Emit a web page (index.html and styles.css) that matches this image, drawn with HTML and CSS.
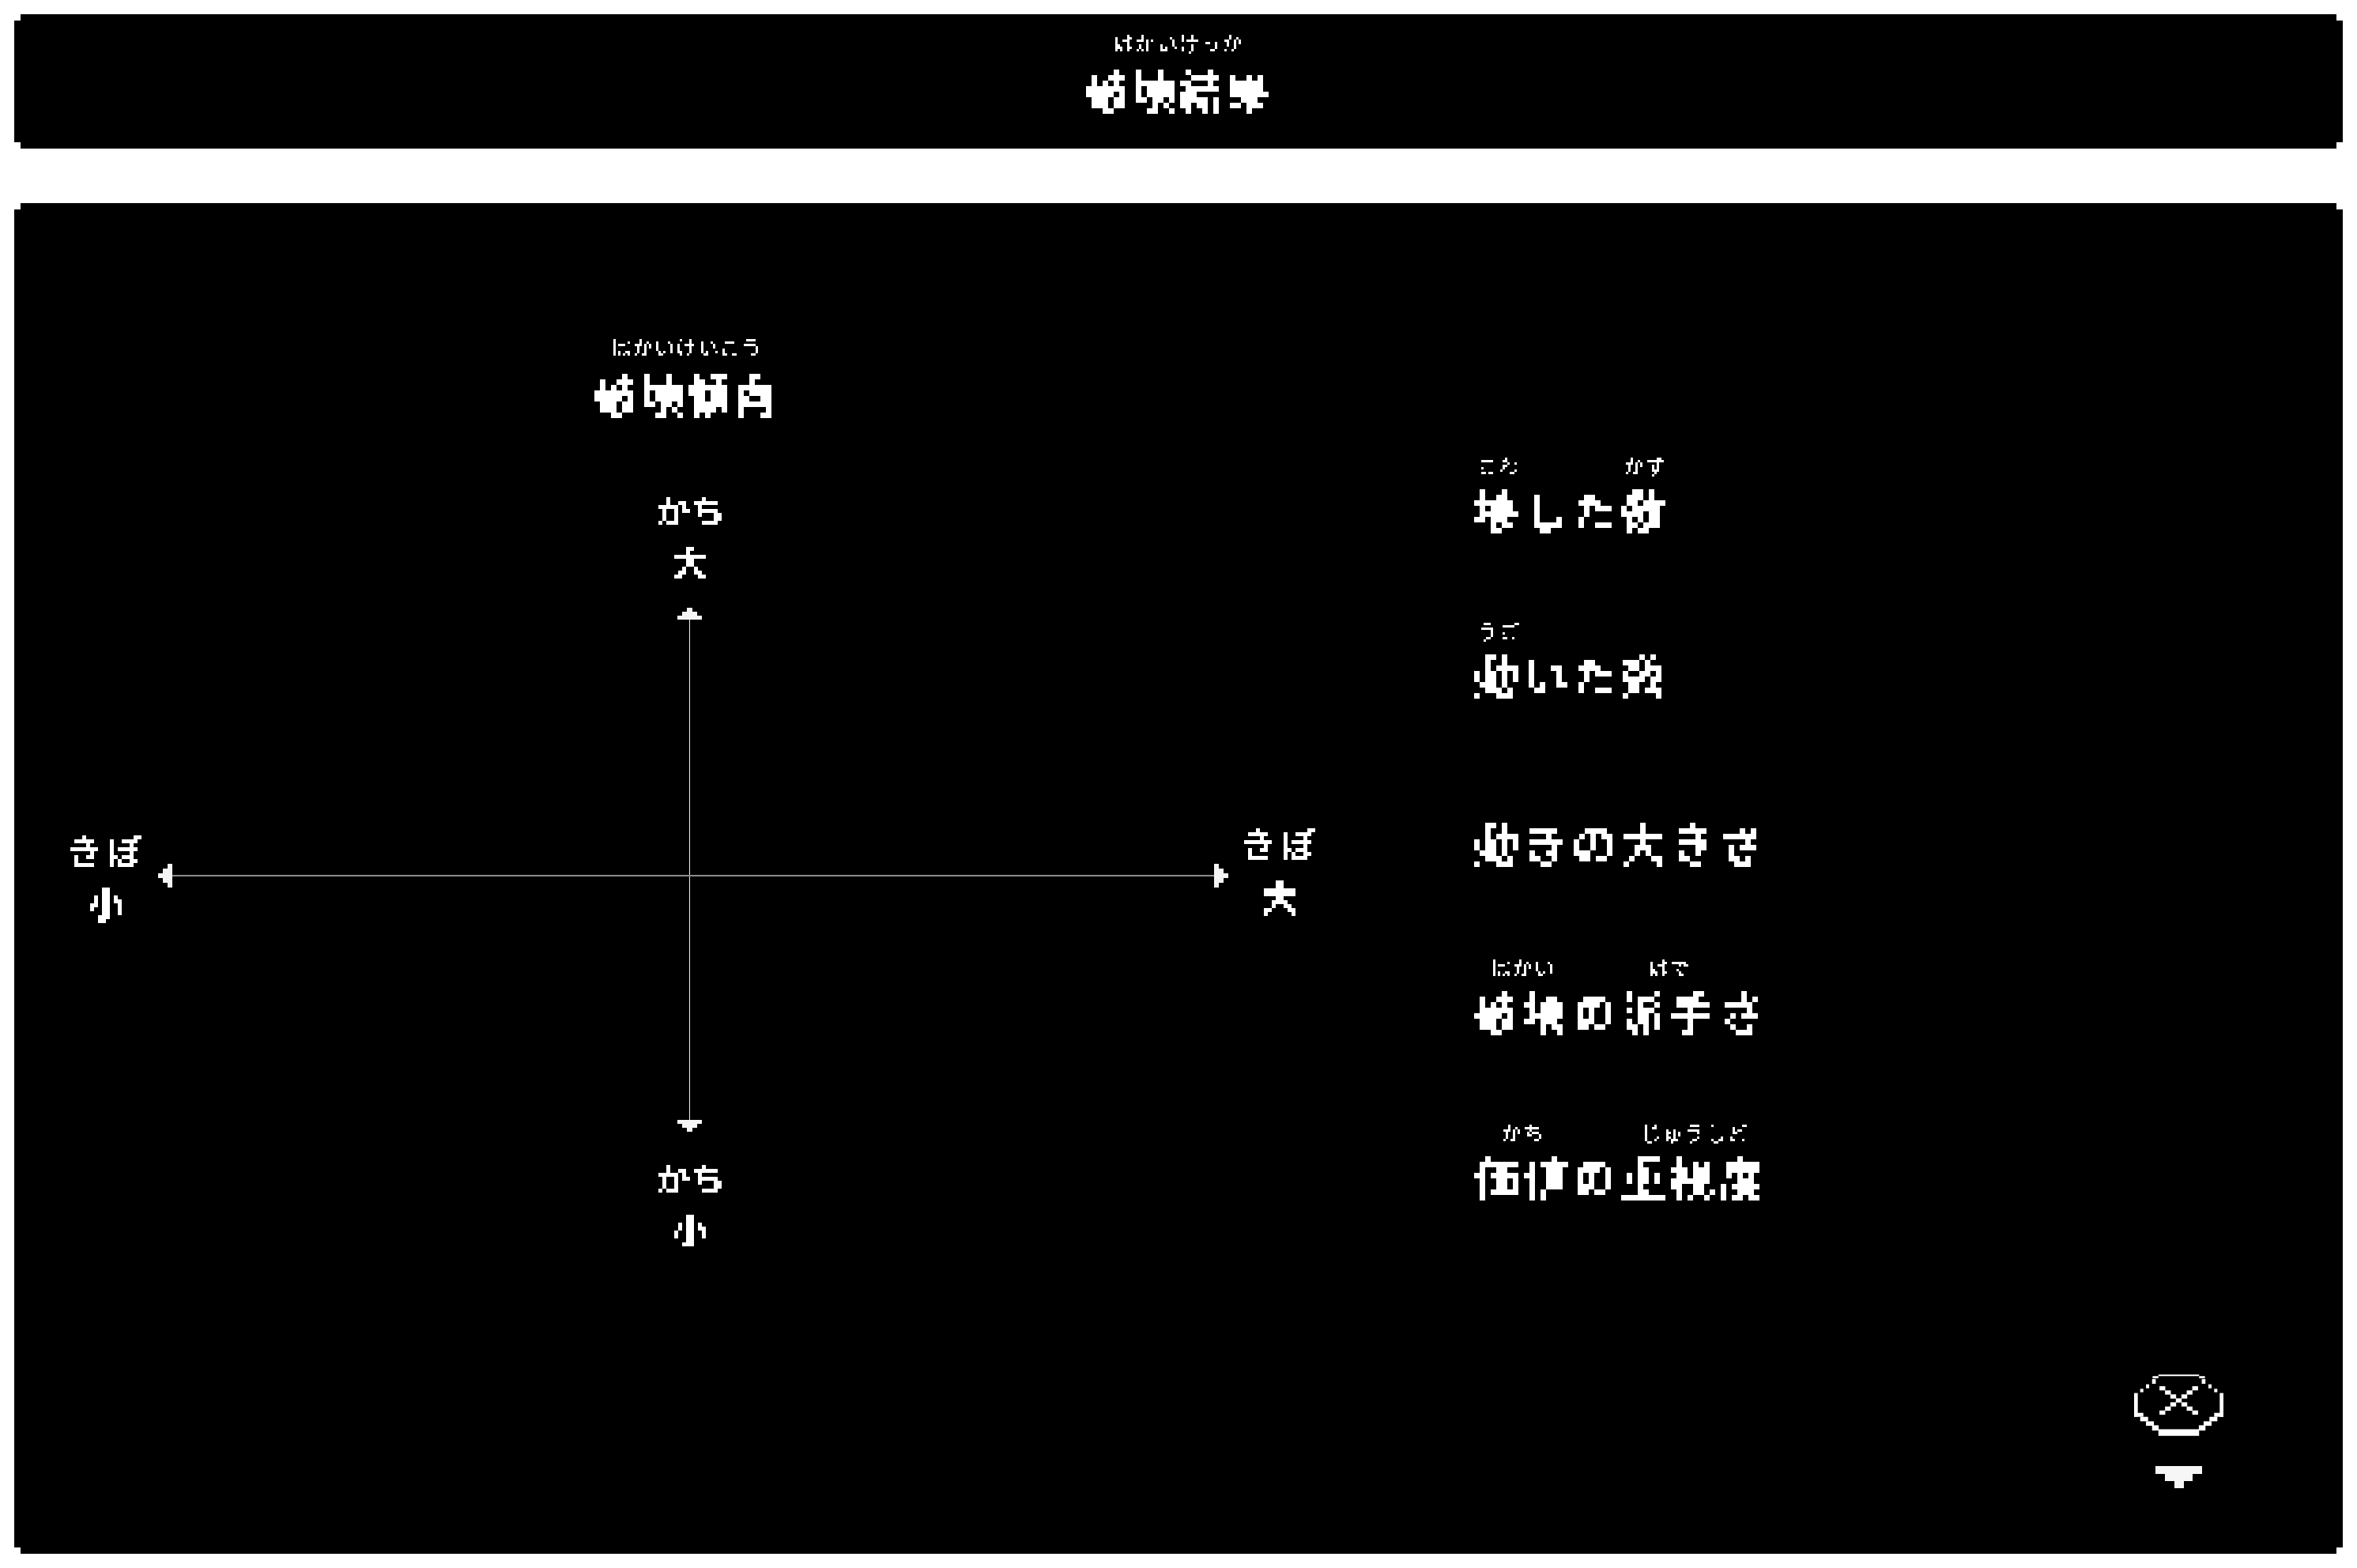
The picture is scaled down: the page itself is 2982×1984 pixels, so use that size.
FILE: index.html
```html
<!DOCTYPE html>
<html lang="ja">
<head>
<meta charset="utf-8">
<title>破壊結果</title>
<link rel="stylesheet" href="styles.css">
</head>
<body>
<svg class="defs" width="0" height="0" aria-hidden="true">
  <defs>
    <filter id="px7" x="0" y="0" width="100%" height="100%" color-interpolation-filters="sRGB">
      <feGaussianBlur in="SourceGraphic" stdDeviation="1" result="b"/>
      <feComponentTransfer in="b" result="t"><feFuncA type="discrete" tableValues="0 1"/></feComponentTransfer>
      <feFlood x="3" y="3" width="1" height="1" flood-color="#fff"/>
      <feComposite width="7" height="7"/>
      <feTile result="a"/>
      <feComposite in="t" in2="a" operator="in"/>
      <feMorphology operator="dilate" radius="3"/>
    </filter>
    <filter id="px5" x="0" y="0" width="100%" height="100%" color-interpolation-filters="sRGB">
      <feGaussianBlur in="SourceGraphic" stdDeviation="1.1" result="b"/>
      <feComponentTransfer in="b" result="t"><feFuncA type="discrete" tableValues="0 1 1"/></feComponentTransfer>
      <feFlood x="2" y="2" width="1" height="1" flood-color="#fff"/>
      <feComposite width="5" height="5"/>
      <feTile result="a"/>
      <feComposite in="t" in2="a" operator="in"/>
      <feMorphology operator="dilate" radius="2"/>
    </filter>
    <filter id="px3" x="0" y="0" width="100%" height="100%" color-interpolation-filters="sRGB">
      <feGaussianBlur in="SourceGraphic" stdDeviation="0.6" result="b"/>
      <feComponentTransfer in="b" result="t"><feFuncA type="discrete" tableValues="0 1 1"/></feComponentTransfer>
      <feFlood x="1" y="1" width="1" height="1" flood-color="#fff"/>
      <feComposite width="3" height="3"/>
      <feTile result="a"/>
      <feComposite in="t" in2="a" operator="in"/>
      <feMorphology operator="dilate" radius="1"/>
    </filter>
  </defs>
</svg>

<header class="panel head">
  <ruby class="word title"><span class="big">破壊結果</span><rt class="furi">はかいけっか</rt></ruby>
</header>

<main class="panel body-panel">
  <section class="tendency">
    <h2 class="sec-title"><ruby class="word title"><span class="big">破壊傾向</span><rt class="furi">はかいけいこう</rt></ruby></h2>
    <div class="chart">
      <svg class="axes" width="1354" height="663" viewBox="200 769 1354 663" aria-hidden="true">
        <rect x="872" y="784" width="1" height="633" fill="#eee"/>
        <rect x="218" y="1107" width="1318" height="2" fill="#8c8c8c"/>
        <g fill="#f4f4f4">
          <rect x="869" y="769" width="7" height="5"/><rect x="863" y="774" width="19" height="5"/><rect x="857" y="779" width="31" height="5"/>
          <rect x="857" y="1417" width="31" height="5"/><rect x="863" y="1422" width="19" height="5"/><rect x="869" y="1427" width="7" height="5"/>
          <rect x="200" y="1105" width="6" height="6"/><rect x="206" y="1099" width="6" height="18"/><rect x="212" y="1093" width="6" height="30"/>
          <rect x="1536" y="1093" width="6" height="30"/><rect x="1542" y="1099" width="6" height="18"/><rect x="1548" y="1105" width="6" height="6"/>
        </g>
      </svg>
      <div class="node n-top"><span class="mid">かち</span><span class="mid kanji">大</span></div>
      <div class="node n-bottom"><span class="mid">かち</span><span class="mid kanji">小</span></div>
      <div class="node side n-left"><span class="mid kibo">きぼ</span><span class="mid kanji">小</span></div>
      <div class="node side n-right"><span class="mid kibo">きぼ</span><span class="mid kanji">大</span></div>
    </div>
  </section>

  <ul class="stats">
    <li class="stat"><ruby class="word"><span class="big wide">壊</span><rt class="furi">こわ</rt></ruby><span class="big wide">した</span><ruby class="word"><span class="big wide">数</span><rt class="furi">かず</rt></ruby></li>
    <li class="stat"><ruby class="word"><span class="big wide">動</span><rt class="furi">うご</rt></ruby><span class="big wide">いた数</span></li>
    <li class="stat"><span class="big wide">動きの大きさ</span></li>
    <li class="stat"><ruby class="word"><span class="big wide">破壊</span><rt class="furi">はかい</rt></ruby><span class="big wide">の</span><ruby class="word"><span class="big wide">派手</span><rt class="furi">はで</rt></ruby><span class="big wide">さ</span></li>
    <li class="stat"><ruby class="word"><span class="big wide">価値</span><rt class="furi">かち</rt></ruby><span class="big wide">の</span><ruby class="word"><span class="big wide">重視度</span><rt class="furi">じゅうしど</rt></ruby></li>
  </ul>

  <div class="close">
    <svg class="close-icon" width="113" height="78" viewBox="120 118 338 232" aria-label="閉じる" role="img">
      <g fill="#fff">
        <rect x="212" y="118" width="154" height="6"/>
        <rect x="212" y="325" width="154" height="25"/>
        <g>
          <rect x="190" y="124" width="22" height="8"/><rect x="188" y="135" width="14" height="18"/><rect x="165" y="155" width="12" height="15"/><rect x="143" y="172" width="12" height="13"/>
          <rect x="120" y="188" width="14" height="90"/><rect x="120" y="263" width="35" height="15"/><rect x="143" y="278" width="30" height="17"/><rect x="165" y="295" width="30" height="17"/><rect x="188" y="310" width="25" height="20"/>
        </g>
        <g transform="translate(578 0) scale(-1 1)">
          <rect x="190" y="124" width="22" height="8"/><rect x="188" y="135" width="14" height="18"/><rect x="165" y="155" width="12" height="15"/><rect x="143" y="172" width="12" height="13"/>
          <rect x="120" y="188" width="14" height="90"/><rect x="120" y="263" width="35" height="15"/><rect x="143" y="278" width="30" height="17"/><rect x="165" y="295" width="30" height="17"/><rect x="188" y="310" width="25" height="20"/>
        </g>
        <rect x="216" y="162" width="22" height="16"/><rect x="237" y="178" width="22" height="16"/><rect x="257" y="193" width="22" height="16"/><rect x="278" y="208" width="22" height="16"/><rect x="299" y="223" width="22" height="16"/><rect x="319" y="239" width="22" height="16"/><rect x="340" y="254" width="22" height="16"/>
        <rect x="340" y="162" width="22" height="16"/><rect x="319" y="178" width="22" height="16"/><rect x="299" y="193" width="22" height="16"/><rect x="257" y="223" width="22" height="16"/><rect x="237" y="239" width="22" height="16"/><rect x="216" y="254" width="22" height="16"/>
      </g>
    </svg>
    <svg class="close-arrow" width="59" height="28" viewBox="0 0 59 28" aria-hidden="true">
      <rect x="0" y="0" width="59" height="10" fill="#f6f6f6"/><rect x="12" y="10" width="35" height="9" fill="#f6f6f6"/><rect x="24" y="19" width="12" height="9" fill="#f6f6f6"/>
    </svg>
  </div>
</main>
</body>
</html>
```
FILE: styles.css
```css
* { box-sizing: border-box; margin: 0; padding: 0; }
html, body { height: 100%; background: #fff; }
body {
  height: 1984px;
  padding: 18px;
  display: flex;
  flex-direction: column;
  gap: 69px;
  overflow: hidden;
  color: #fff;
  font-family: "Noto Sans CJK JP", "Noto Sans", sans-serif;
}
.defs { position: absolute; }

.panel {
  background: #000;
  clip-path: polygon(8px 0, calc(100% - 8px) 0, calc(100% - 8px) 8px, 100% 8px, 100% calc(100% - 8px), calc(100% - 8px) calc(100% - 8px), calc(100% - 8px) 100%, 8px 100%, 8px calc(100% - 8px), 0 calc(100% - 8px), 0 8px, 8px 8px);
}
.head {
  height: 170px;
  display: flex;
  justify-content: center;
  align-items: flex-end;
  padding-bottom: 43px;
}
.body-panel {
  flex: 1;
  position: relative;
  display: grid;
  grid-template-columns: 1847px 1fr;
}

.word {
  display: inline-flex;
  flex-direction: column-reverse;
  align-items: center;
  gap: 10px;
}
.word.title { gap: 14px; }
.big {
  display: block;
  font-size: 56px;
  line-height: 64px;
  font-weight: 700;
  letter-spacing: 2.6px;
  white-space: nowrap;
  filter: url(#px7);
}
.big.wide { letter-spacing: 6px; }
.furi {
  display: block;
  font-size: 26px;
  line-height: 26px;
  font-weight: 400;
  letter-spacing: 1.5px;
  white-space: nowrap;
  text-align: center;
  filter: url(#px3);
}
.mid {
  display: block;
  font-size: 44px;
  line-height: 63px;
  font-weight: 500;
  text-align: center;
  filter: url(#px5);
}
.kanji { font-size: 46px; }
.side .mid { line-height: 66px; }
.mid.kibo { font-size: 46px; letter-spacing: 4px; }

.tendency { min-width: 0; }
.sec-title {
  height: 343px;
  width: 1702px;
  padding-top: 169px;
  display: flex;
  justify-content: center;
  align-items: flex-start;
  font-weight: 500;
}
.chart { position: relative; height: 1000px; }
.axes { position: absolute; left: 182px; top: 169px; }
.node { position: absolute; width: 120px; }
.n-top { left: 795px; top: 14px; }
.n-bottom { left: 795px; top: 859px; }
.n-left { left: 56px; top: 442px; }
.n-right { left: 1541px; top: 433px; }

.stats {
  list-style: none;
  display: grid;
  grid-template-rows: 209px 213px 213px 209px 104px;
  padding-top: 315px;
  align-content: start;
}
.stat {
  display: flex;
  align-items: flex-end;
  height: 104px;
  white-space: nowrap;
}

.close {
  position: absolute;
  right: 151px;
  bottom: 83px;
  display: flex;
  flex-direction: column;
  align-items: center;
  gap: 38px;
}
.close-icon, .close-arrow { display: block; }
```
